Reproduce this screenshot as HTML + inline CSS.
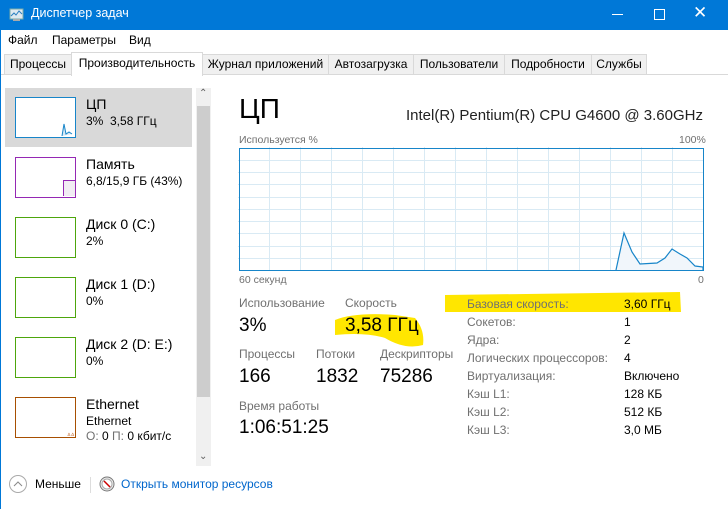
<!DOCTYPE html>
<html><head><meta charset="utf-8"><style>
*{margin:0;padding:0;box-sizing:border-box}
body{width:728px;height:509px;overflow:hidden;background:#fff;font-family:"Segoe UI","Liberation Sans","Noto Sans CJK JP",sans-serif;color:#000;position:relative}
.a{position:absolute;white-space:nowrap}
.g{color:#707070}
.tab{position:absolute;top:54px;height:21px;border:1px solid #d9d9d9;background:#f0f0f0;font-size:12px;padding-top:2px;text-align:center}
.th{position:absolute;left:15px;width:61px;height:41px;background:#fff;border-width:1px;border-style:solid}
.n{font-size:14px}
.s{font-size:12px}
</style></head><body>
<div class="a" style="left:0;top:0;width:728px;height:30px;background:#0078d7"></div>
<svg class="a" style="left:8px;top:7px" width="16" height="16"><rect x="2" y="2" width="13" height="10" fill="#dfe9f0" stroke="#7aa" /><polyline points="3,9 6,6 8,8 11,4 14,7" fill="none" stroke="#2a7fc0"/><rect x="5" y="12" width="7" height="2" fill="#aaa"/></svg>
<div class="a" style="left:31px;top:6px;color:#fff;font-size:12.5px">Диспетчер задач</div>
<div class="a" style="left:612px;top:14px;width:11px;height:1px;background:#fff"></div>
<div class="a" style="left:654px;top:9px;width:11px;height:11px;border:1px solid #fff"></div>
<div class="a" style="left:693px;top:3px;color:#fff;font-size:17px">✕</div>
<div class="a" style="left:0;top:30px;width:1px;height:479px;background:#0078d7"></div>
<div class="a s" style="left:8px;top:33px">Файл</div>
<div class="a s" style="left:52px;top:33px">Параметры</div>
<div class="a s" style="left:129px;top:33px">Вид</div>
<div class="a" style="left:1px;top:74px;width:727px;height:1px;background:#d9d9d9"></div>
<div class="tab" style="left:4px;width:68px">Процессы</div>
<div class="tab" style="left:202px;width:127px">Журнал приложений</div>
<div class="tab" style="left:328px;width:86px">Автозагрузка</div>
<div class="tab" style="left:413px;width:92px">Пользователи</div>
<div class="tab" style="left:504px;width:88px">Подробности</div>
<div class="tab" style="left:591px;width:56px">Службы</div>
<div class="tab" style="left:71px;top:52px;height:24px;width:132px;background:#fff;border-bottom:none;padding-top:3px">Производительность</div>

<div class="a" style="left:5px;top:88px;width:187px;height:59px;background:#d9d9d9"></div>
<div class="a" style="left:196px;top:88px;width:15px;height:378px;background:#f0f0f0"></div>
<div class="a" style="left:197px;top:106px;width:13px;height:291px;background:#cdcdcd"></div>
<div class="a" style="left:199px;top:88px;font-size:10px;color:#606060">⌃</div>
<div class="a" style="left:199px;top:451px;font-size:10px;color:#606060">⌄</div>

<div class="th" style="top:97px;border-color:#1785c9"></div>
<svg class="a" style="left:60px;top:120px" width="14" height="16"><polyline points="2,16 4,4 6,14 9,12 12,14" fill="#d6e8f5" stroke="#1785c9"/></svg>
<div class="a n" style="left:86px;top:96px">ЦП</div><div class="a s" style="left:86px;top:114px">3%&nbsp; 3,58 ГГц</div>
<div class="th" style="top:157px;border-color:#9528b4"></div>
<div class="a" style="left:63px;top:180px;width:12px;height:16px;background:#f1edf3;border-left:1px solid #9528b4;border-top:1px solid #9528b4"></div>
<div class="a n" style="left:86px;top:156px">Память</div><div class="a s" style="left:86px;top:174px">6,8/15,9 ГБ (43%)</div>
<div class="th" style="top:217px;border-color:#4da60c"></div>
<div class="a n" style="left:86px;top:216px">Диск 0 (C:)</div><div class="a s" style="left:86px;top:234px">2%</div>
<div class="th" style="top:277px;border-color:#4da60c"></div>
<div class="a n" style="left:86px;top:276px">Диск 1 (D:)</div><div class="a s" style="left:86px;top:294px">0%</div>
<div class="th" style="top:337px;border-color:#4da60c"></div>
<div class="a n" style="left:86px;top:336px">Диск 2 (D: E:)</div><div class="a s" style="left:86px;top:354px">0%</div>
<div class="th" style="top:397px;border-color:#a74f01"></div>
<div class="a" style="left:67px;top:432px;font-size:7px;color:#c06020">ᐞᐞ</div>
<div class="a n" style="left:86px;top:396px">Ethernet</div><div class="a s" style="left:86px;top:414px">Ethernet</div>
<div class="a s" style="left:86px;top:429px"><span class="g">О:</span> 0 <span class="g">П:</span> 0 кбит/с</div>

<div class="a" style="left:239px;top:93px;font-size:28px">ЦП</div>
<div class="a" style="left:406px;top:107px;font-size:15px;color:#222">Intel(R) Pentium(R) CPU G4600 @ 3.60GHz</div>
<div class="a g" style="left:239px;top:134px;font-size:10.5px">Используется %</div>
<div class="a g" style="left:679px;top:134px;font-size:10.5px">100%</div>
<svg class="a" style="left:238px;top:147px" width="467" height="125">
<g stroke="#d9eaf4" stroke-width="1">
<line x1="0" y1="13.5" x2="466" y2="13.5"/><line x1="0" y1="25.5" x2="466" y2="25.5"/><line x1="0" y1="37.5" x2="466" y2="37.5"/><line x1="0" y1="50.5" x2="466" y2="50.5"/><line x1="0" y1="62.5" x2="466" y2="62.5"/><line x1="0" y1="74.5" x2="466" y2="74.5"/><line x1="0" y1="86.5" x2="466" y2="86.5"/><line x1="0" y1="99.5" x2="466" y2="99.5"/><line x1="0" y1="111.5" x2="466" y2="111.5"/>
<line x1="31.5" y1="0" x2="31.5" y2="123"/><line x1="62.5" y1="0" x2="62.5" y2="123"/><line x1="93.5" y1="0" x2="93.5" y2="123"/><line x1="124.5" y1="0" x2="124.5" y2="123"/><line x1="155.5" y1="0" x2="155.5" y2="123"/><line x1="186.5" y1="0" x2="186.5" y2="123"/><line x1="217.5" y1="0" x2="217.5" y2="123"/><line x1="248.5" y1="0" x2="248.5" y2="123"/><line x1="279.5" y1="0" x2="279.5" y2="123"/><line x1="310.5" y1="0" x2="310.5" y2="123"/><line x1="341.5" y1="0" x2="341.5" y2="123"/><line x1="372.5" y1="0" x2="372.5" y2="123"/><line x1="403.5" y1="0" x2="403.5" y2="123"/><line x1="434.5" y1="0" x2="434.5" y2="123"/>
</g>
<polyline points="378,123 386,86 394,105 402,117 419,116 427,111 434,102 442,107 449,111 457,119 465,120 465,123" fill="#f1f6fb" stroke="#1785c9" stroke-width="1.2"/>
<rect x="1.5" y="1.5" width="464" height="122" fill="none" stroke="#1785c9"/>
</svg>
<div class="a g" style="left:239px;top:274px;font-size:10.5px">60 секунд</div>
<div class="a g" style="left:698px;top:274px;font-size:10.5px">0</div>

<svg class="a" style="left:335px;top:290px" width="350" height="60"><path d="M110 5 L345 2 L346 22 L110 22 Z" fill="#ffe600"/><path d="M0 30 Q20 22 60 25 L80 28 Q90 40 88 55 Q70 60 50 48 Q30 42 0 45 Z" fill="#ffe600"/></svg>
<div class="a g" style="left:239px;top:296px;font-size:12px">Использование</div>
<div class="a g" style="left:345px;top:296px;font-size:12px">Скорость</div>
<div class="a" style="left:239px;top:315px;font-size:19px">3%</div>
<div class="a" style="left:345px;top:315px;font-size:19px">3,58 ГГц</div>
<div class="a g" style="left:239px;top:347px;font-size:12px">Процессы</div>
<div class="a g" style="left:316px;top:347px;font-size:12px">Потоки</div>
<div class="a g" style="left:380px;top:347px;font-size:12px">Дескрипторы</div>
<div class="a" style="left:239px;top:366px;font-size:19px">166</div>
<div class="a" style="left:316px;top:366px;font-size:19px">1832</div>
<div class="a" style="left:380px;top:366px;font-size:19px">75286</div>
<div class="a g" style="left:239px;top:399px;font-size:12px">Время работы</div>
<div class="a" style="left:239px;top:417px;font-size:19px">1:06:51:25</div>

<div class="a g" style="left:467px;top:295px;font-size:12px;line-height:18px">Базовая скорость:<br>Сокетов:<br>Ядра:<br>Логических процессоров:<br>Виртуализация:<br>Кэш L1:<br>Кэш L2:<br>Кэш L3:</div>
<div class="a" style="left:624px;top:295px;font-size:12px;line-height:18px">3,60 ГГц<br>1<br>2<br>4<br>Включено<br>128 КБ<br>512 КБ<br>3,0 МБ</div>

<svg class="a" style="left:8px;top:474px" width="20" height="20"><circle cx="10" cy="10" r="8.5" fill="none" stroke="#aaa"/><polyline points="6,12 10,8 14,12" fill="none" stroke="#888"/></svg>
<div class="a s" style="left:35px;top:477px">Меньше</div>
<div class="a" style="left:90px;top:477px;width:1px;height:16px;background:#ddd"></div>
<svg class="a" style="left:99px;top:476px" width="16" height="16"><circle cx="8" cy="8" r="7" fill="#eee" stroke="#777"/><circle cx="8" cy="8" r="5" fill="#fff" stroke="#aaa"/><line x1="5" y1="5" x2="11" y2="11" stroke="#c00" stroke-width="1.5"/></svg>
<div class="a s" style="left:121px;top:477px;color:#0066cc">Открыть монитор ресурсов</div>
</body></html>
